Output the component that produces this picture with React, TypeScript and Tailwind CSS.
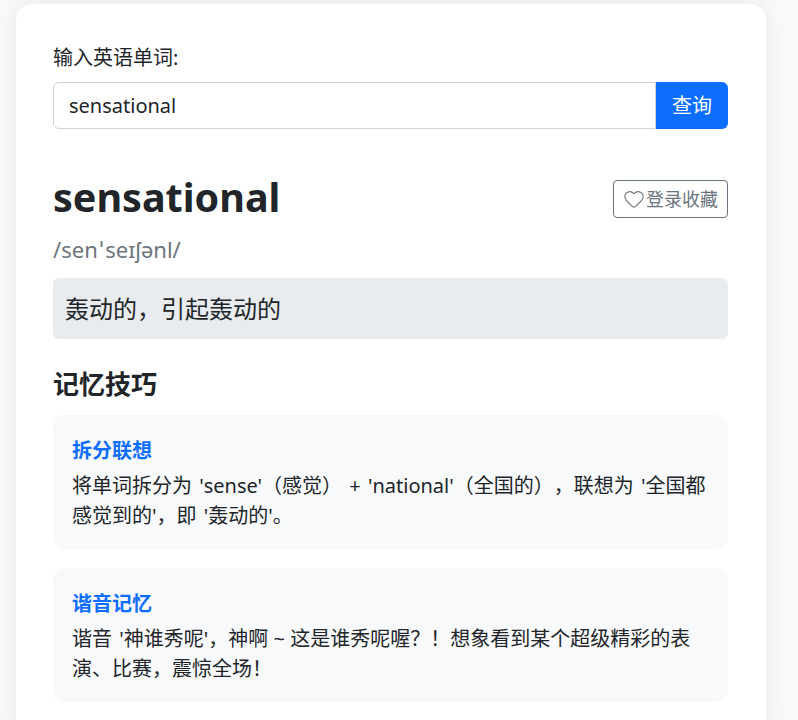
import { Heart } from "lucide-react";

const tip2 = "谐音 '神谁秀呢'，神啊\u2009\u200a~\u2009\u200a这是谁秀呢喔？！想象看到某个超级精彩的表演、比赛，震惊全场！";

export default function App() {
  return (
    <div className="h-[720px] overflow-hidden bg-[#f8f9fa] px-4 pt-1 text-[#212529] font-['Noto_Sans','Noto_Sans_CJK_SC',sans-serif] [text-spacing-trim:space-all]">
      <div className="w-[750px] rounded-2xl bg-white pl-[37px] pr-[38px] pt-[39px] pb-8 shadow-[0_0_20px_rgba(0,0,0,0.08)]">
        <label className="mb-[9px] block text-[20px] leading-[30px]">输入英语单词:</label>
        <div className="flex h-[47px]">
          <input
            readOnly
            value="sensational"
            className="min-w-0 flex-1 rounded-l-md border border-[#ced4da] bg-white px-[15px] text-[20px] text-[#212529] outline-none"
          />
          <button className="w-[72px] rounded-r-md bg-[#0d6efd] text-[20px] text-white">查询</button>
        </div>

        <div className="mt-[40px] flex items-center justify-between">
          <h1 className="pb-[3px] text-[39.5px] font-bold leading-[57px]">sensational</h1>
          <button className="flex h-[38px] w-[115px] items-center justify-center gap-[1px] rounded border border-[#6c757d] text-[18px] text-[#6c757d]">
            <Heart size={22} strokeWidth={1.2} />
            登录收藏
          </button>
        </div>
        <p className="mt-[5px] mb-[14px] text-[22px] leading-[30px] text-[#6c757d]">
          /sen<span className="mx-[2px]">ˈ</span>seɪʃənl/
        </p>

        <div className="rounded-md bg-[#e9ecef] px-3 py-[14px] text-[24px] leading-[33px]">轰动的，引起轰动的</div>

        <h2 className="mt-[27px] text-[26px] font-bold leading-[36px]">记忆技巧</h2>

        <div className="mt-[13px] flex flex-col gap-[19px]">
          <div className="rounded-xl bg-[#f8f9fa] px-[19px] pt-[21px] pb-[18px]">
            <h3 className="text-[20px] font-bold leading-[30px] text-[#0d6efd]">拆分联想</h3>
            <p className="mt-[5px] text-[20px] leading-[30px] [word-spacing:2px]">
              将单词拆分为 'sense'（感觉） + 'national'（全国的），联想为 '全国都感觉到的'，即 '轰动的'。
            </p>
          </div>
          <div className="rounded-xl bg-[#f8f9fa] px-[19px] pt-[21px] pb-[18px]">
            <h3 className="text-[20px] font-bold leading-[30px] text-[#0d6efd]">谐音记忆</h3>
            <p className="mt-[5px] text-[20px] leading-[30px] [word-spacing:2px]">{tip2}</p>
          </div>
        </div>
      </div>
    </div>
  );
}
